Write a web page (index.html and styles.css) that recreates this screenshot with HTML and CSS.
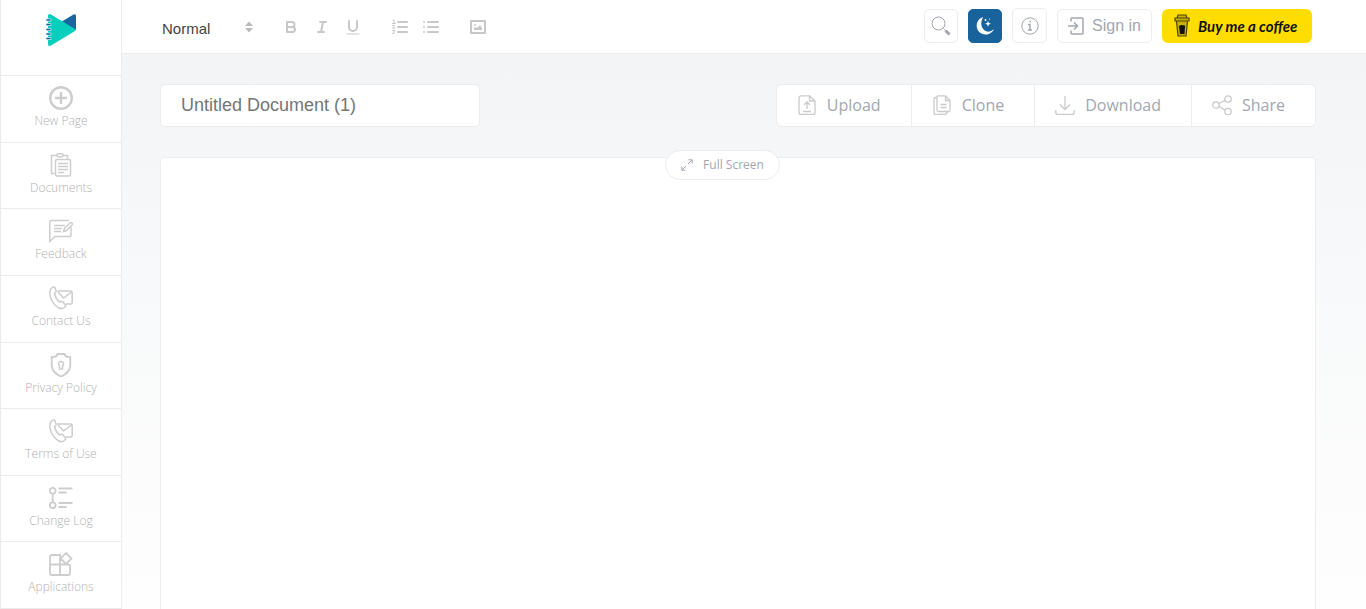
FILE: index.html
```html
<!DOCTYPE html>
<html lang="en">
<head>
    <meta charset="UTF-8">
    <meta name="viewport" content="width=device-width, initial-scale=1.0">
    <title>Untitled Document (1)</title>
    <link rel="stylesheet" href="styles.css">
</head>
<body>

<div class="app">
    <nav class="sidebar">
        <a href="#" class="logo" aria-label="Home">
            <svg width="32" height="34" viewBox="0 0 32 34">
                <path d="M16 9 L28.5 1.5 Q31 .5 31 3 V17 Z" fill="#1a649f"/>
                <path d="M3 3 Q3 0 6 1.5 L30 16 Q31 17 30 18 L6 32.5 Q3 34 3 31 Z" fill="#06d0bd"/>
                <path d="M2 7h3M2 11.500h3M2 16.500h3M2 21h3M2 25.500h3" stroke="#d5f3f3" stroke-width="3" stroke-linecap="round"/>
                <path d="M2 7h3M2 11.500h3M2 16.500h3M2 21h3M2 25.500h3" stroke="#1a649f" stroke-width="1.6" stroke-linecap="round"/>
            </svg>
        </a>
        <a href="#" class="nav-item">
            <svg class="icon bold" viewBox="0 0 24 24"><circle cx="12" cy="12" r="10.8"/><path d="M12 6v12M6 12h12"/></svg>
            <span>New Page</span>
        </a>
        <a href="#" class="nav-item">
            <svg class="icon" viewBox="0 0 24 24"><path d="M5.500 20.500H2.500V2.500h6M14 2.500h4.500v4"/><rect x="8" y=".8" width="6" height="3" rx="1"/><rect x="6.500" y="6.500" width="15" height="16.500" rx="1.5"/><path d="M9 10.500h10M9 13.500h10M9 16.500h10M9 19.500h6"/></svg>
            <span>Documents</span>
        </a>
        <a href="#" class="nav-item">
            <svg class="icon" viewBox="0 0 24 24"><path d="M20 1.500H2Q.8 1.500.8 3v19.500L6 17.500h14.500q1.500 0 1.500-1.500V8"/><path d="M5 6.500h11M5 9.500h8M5 12.500h7M14.500 12.500l1-3L21 4q1-1 2 0t0 2l-5.500 5.500z"/></svg>
            <span>Feedback</span>
        </a>
        <a href="#" class="nav-item">
            <svg class="icon" viewBox="0 0 24 24"><path d="M2 2.500q2-2 3.500-1.500l1.700 4q.2 1.300-1.700 2.500 1 5 5 8.500 2-1 3-.5l3 3.500q.5 1-1 2.500-4 3-9-2T.8 8Q.6 4.500 2 2.500z"/><path d="M8.500 5h13q1.700 0 1.700 1.500v10q0 1.500-1.700 1.500H17M9 6l5.500 6L22.500 6"/></svg>
            <span>Contact Us</span>
        </a>
        <a href="#" class="nav-item">
            <svg class="icon" viewBox="0 0 24 24"><path class="thick" d="M8.500 1h7q.5 2.800 3.500 2.800h2.300V13q-1 7-9.300 10.500Q3.700 20 2.700 13V3.800H5Q8 3.800 8.500 1z"/><path d="M10.500 16v-3a2.500 2.500 0 1 1 3 0V16z"/></svg>
            <span>Privacy Policy</span>
        </a>
        <a href="#" class="nav-item">
            <svg class="icon" viewBox="0 0 24 24"><path d="M2 2.500q2-2 3.500-1.500l1.700 4q.2 1.300-1.700 2.500 1 5 5 8.500 2-1 3-.5l3 3.500q.5 1-1 2.500-4 3-9-2T.8 8Q.6 4.500 2 2.500z"/><path d="M8.500 5h13q1.700 0 1.700 1.500v10q0 1.500-1.700 1.500H17M9 6l5.500 6L22.500 6"/></svg>
            <span>Terms of Use</span>
        </a>
        <a href="#" class="nav-item">
            <svg class="icon thick" viewBox="0 0 24 24"><circle cx="3.700" cy="4.700" r="2.900"/><circle cx="3.700" cy="19.300" r="2.900"/><path d="M3.700 8v8M9.500 2.500h14M9.500 6.500h8M9.500 17h14M9.500 21h8"/></svg>
            <span>Change Log</span>
        </a>
        <a href="#" class="nav-item">
            <svg class="icon" viewBox="0 0 24 24"><path class="thick" d="M11 12.500H1V5q0-2 2-2H11v20H3q-2 0-2-2v-8.500M11 12.500h8q2 0 2 2V21q0 2-2 2h-8M17 1l5.500 5.500-5.500 5.500-5.500-5.500z"/></svg>
            <span>Applications</span>
        </a>
    </nav>

    <div class="content">
        <header class="topbar">
            <div class="format">
                <label class="picker">
                    <select aria-label="Text style">
                        <option>Normal</option>
                        <option>Heading 1</option>
                        <option>Heading 2</option>
                    </select>
                    <svg width="18" height="18" viewBox="0 0 18 18"><path d="M9 3.500L13 8H5zM9 14.500L13 10H5z"/></svg>
                </label>
                <div class="tools">
                    <button type="button" aria-label="Bold"><svg viewBox="0 0 18 18"><path d="M5 4h5a2.500 2.500 0 0 1 0 5H5zM5 9h5.500a2.500 2.500 0 0 1 0 5H5z"/></svg></button>
                    <button type="button" aria-label="Italic"><svg viewBox="0 0 18 18"><path d="M7 4h6M5 14h6M8 14l2-10"/></svg></button>
                    <button type="button" aria-label="Underline"><svg viewBox="0 0 18 18"><path d="M5 3v6a4 4 0 0 0 8 0V3"/><path class="thin" d="M3 16h12"/></svg></button>
                </div>
                <div class="tools">
                    <button type="button" aria-label="Numbered list"><svg viewBox="0 0 18 18"><path d="M7 4h9M7 9h9M7 14h9"/><path class="thin" d="M2 2h1v3M1.500 5.500h3M1.500 7.500q2.500-.5 2 .7l-2 2h2.500M1.500 12.500h2.500l-1 1.500q1.500 1.500-1.500 1.500"/></svg></button>
                    <button type="button" aria-label="Bullet list"><svg viewBox="0 0 18 18"><path d="M6 4h10M6 9h10M6 14h10M2 4h.01M2 9h.01M2 14h.01"/></svg></button>
                </div>
                <div class="tools">
                    <button type="button" aria-label="Insert image"><svg viewBox="0 0 18 18"><rect x="2" y="3" width="14" height="12"/><path class="solid" d="M5 12v-2l2-1 1 1 3-3 2 3v2z"/><circle class="solid" cx="6" cy="7" r="1"/></svg></button>
                </div>
            </div>

            <div class="actions">
                <button type="button" class="square" aria-label="Search"><svg width="20" height="20" viewBox="0 0 20 20"><circle cx="7.500" cy="7.500" r="6.500"/><path d="M12.500 12.500l2 2"/><path d="M14.500 14.500l4 4" stroke-width="3"/></svg></button>
                <button type="button" class="square dark" aria-label="Dark mode"><svg width="20" height="20" viewBox="0 0 20 20"><path d="M8 1A9 9 0 1 0 19 13Q14 18 9 14T8 1z"/><path d="M13 4.800l.8 2.200 2.200.8-2.200.8-.8 2.200-.8-2.200-2.200-.8 2.200-.8z"/><circle cx="10.500" cy="4" r=".9"/><circle cx="14.500" cy="3" r=".6"/></svg></button>
                <button type="button" class="square info" aria-label="Information"><svg width="18" height="18" viewBox="0 0 18 18"><circle cx="9" cy="9" r="8.200"/><path d="M7 7.500h2v5.500M7 13h4M8.500 4.500h1.500" stroke-width="1.5"/></svg></button>
                <button type="button" class="signin"><svg width="16" height="18" viewBox="0 0 16 18"><path d="M3 4.500V2Q3 1 4 1h10q1 0 1 1v14q0 1-1 1H4q-1 0-1-1v-2.500M0 9h9M6 5.500L9.500 9 6 12.500"/></svg>Sign in</button>
                <a href="#" class="coffee">
                    <svg width="16" height="23" viewBox="0 0 16 23"><path d="M2.500 7l1.500 15h8l1.500-15M1 4h14v3H1zM3 4l1-3h8l1 3" fill="#c9ae00" stroke="#4d4600" stroke-width="1.2"/><path d="M5 12l2-1 4 .5-.5 8.500H6z" fill="#111" stroke="none"/></svg>
                    <span>Buy me a coffee</span>
                </a>
            </div>
        </header>

        <main class="workspace">
            <div class="doc-bar">
                <input type="text" class="doc-title" aria-label="Document title" placeholder="Untitled Document (1)">
                <div class="doc-actions">
                    <button type="button"><svg viewBox="0 0 20 20"><path d="M12.500 .8H4Q2 .8 2 3v14.500Q2 19.500 4 19.500h12q2 0 2-2V6zM12.500 .8V6H18M10 14V7.500M7 10l3-3 3 3M6 16.500h8"/></svg>Upload</button>
                    <button type="button"><svg viewBox="0 0 20 20"><path d="M13.500 .8H6.500Q5 .8 5 2.500v12.500q0 1.500 1.500 1.500h10q1.500 0 1.500-1.500V5.500zM13.500 .8v4.700H18M5 2.500H3.500Q2 2.500 2 4v13.500q0 2 2 2h9.500l2-2.500M8.500 9.500h6M8.500 12.500h6"/></svg>Clone</button>
                    <button type="button"><svg viewBox="0 0 20 20"><path d="M10 1v13M5 9.500l5 5 5-5M.8 15v2.500q0 2 2 2h14.400q2 0 2-2V15"/></svg>Download</button>
                    <button type="button"><svg viewBox="0 0 20 20"><circle cx="4" cy="10" r="3.200"/><circle cx="16" cy="4" r="3.200"/><circle cx="16" cy="16.500" r="3.200"/><path d="M7 8.500l6-3M7 11.500l6 3.500"/></svg>Share</button>
                </div>
            </div>
            <div class="paper">
                <button type="button" class="fullscreen"><svg width="12" height="12" viewBox="0 0 12 12"><path d="M7.500 .8h3.700v3.700M11 1L7 5M4.500 11.200H.8V7.500M1 11l4-4"/></svg>Full Screen</button>
                <div class="editor" contenteditable="true" role="textbox" aria-label="Document text"></div>
            </div>
        </main>
    </div>
</div>

</body>
</html>
```
FILE: styles.css
```css
* {
    box-sizing: border-box;
}
body {
    margin: 0;
    font-family: "Open Sans", sans-serif;
    color: #a2a7af;
    background-color: #fff;
}
button {
    font: inherit;
    color: inherit;
    background: #fff;
    border: 1px solid #ebecee;
    cursor: pointer;
    padding: 0;
}
svg {
    display: block;
    flex: none;
    fill: none;
    stroke: currentColor;
}
.app {
    display: flex;
    height: 100vh;
    overflow: hidden;
}

/* Sidebar */
.sidebar {
    display: flex;
    flex-direction: column;
    flex: none;
    width: 122px;
    border: 1px solid #ebebeb;
    border-width: 0 1px;
}
.sidebar a {
    text-decoration: none;
    border-bottom: 1px solid #ebebeb;
}
.logo {
    height: 76px;
    padding: 13px 0 0 44px;
}
.logo svg {
    stroke: none;
}
.nav-item {
    display: flex;
    flex: 1;
    flex-direction: column;
    align-items: center;
    padding-top: 10px;
    font-size: 12px;
    font-weight: 300;
    line-height: 22px;
    color: #b2b2b2;
}
.icon {
    width: 24px;
    height: 24px;
    color: #cdcdcd;
    stroke-width: 1.5;
}
.icon.bold {
    stroke-width: 2.4;
}
.thick,
.icon.thick {
    stroke-width: 1.8;
}

/* Top bar */
.content {
    display: flex;
    flex: 1;
    flex-direction: column;
    min-width: 0;
}
.topbar {
    display: flex;
    justify-content: space-between;
    height: 54px;
    padding: 0 54px 0 40px;
    border-bottom: 1px solid #ebecee;
}
.format,
.actions,
.tools {
    display: flex;
    align-items: center;
}
.format {
    gap: 19px;
}
.tools {
    gap: 3px;
}
.picker {
    display: flex;
    align-items: center;
    width: 96px;
    color: #444;
}
.picker select {
    flex: 1;
    width: 100%;
    padding: 3px 0 0;
    border: 0;
    appearance: none;
    background: none;
    color: inherit;
    font: 15px "Liberation Sans", Arial, sans-serif;
}
.picker svg {
    fill: #bbb;
    stroke: none;
}
.tools button {
    display: flex;
    justify-content: center;
    width: 28px;
    border: 0;
    color: #c8c8c8;
}
.tools svg {
    width: 18px;
    height: 18px;
    stroke-width: 2;
    stroke-linecap: round;
    stroke-linejoin: round;
}
.tools .thin {
    stroke-width: 1;
}
.tools .solid {
    fill: currentColor;
    stroke: none;
}
.actions {
    gap: 10px;
    padding-bottom: 2px;
}
.square,
.signin {
    display: flex;
    align-items: center;
    justify-content: center;
    height: 34px;
    border-radius: 5px;
}
.square {
    width: 34px;
}
.square.info {
    width: 35px;
    height: 35px;
}
.square.dark {
    background-color: #19639d;
    border-color: #19639d;
    color: #fff;
}
.dark svg {
    fill: #fff;
    stroke: none;
}
.signin {
    gap: 8px;
    width: 95px;
    font: 16px "Liberation Sans", Arial, sans-serif;
}
.signin svg {
    stroke-width: 1.5;
}
.coffee {
    display: flex;
    align-items: center;
    gap: 8px;
    width: 150px;
    height: 34px;
    padding-left: 12px;
    border-radius: 6px;
    background-color: #fd0;
    color: #111;
    font: italic bold 15px Lato, cursive;
    text-decoration: none;
    white-space: nowrap;
}

/* Document area */
.workspace {
    display: flex;
    flex: 1;
    flex-direction: column;
    gap: 30px;
    padding: 30px 50px 0 38px;
    background: linear-gradient(#f3f4f6, #f8f9fa 40%, #fefefe);
}
.doc-bar {
    display: flex;
    justify-content: space-between;
}
.doc-title {
    width: 320px;
    height: 43px;
    padding: 0 20px;
    border: 1px solid #ebecee;
    border-radius: 5px;
    font: 18px "Liberation Sans", Arial, sans-serif;
}
.doc-title::placeholder {
    color: #757575;
}
.doc-actions {
    display: flex;
    border: 1px solid #ebecee;
    border-radius: 6px;
    overflow: hidden;
}
.doc-actions button {
    display: flex;
    align-items: center;
    gap: 10px;
    padding: 0 30px 2px 20px;
    border-width: 0 1px 0 0;
    font-size: 16px;
}
.doc-actions button:last-child {
    border-right: 0;
}
.doc-actions svg {
    width: 20px;
    height: 20px;
    color: #cacaca;
    stroke-width: 1.3;
}
.paper {
    position: relative;
    display: flex;
    flex: 1;
    border: 1px solid #ebecee;
    border-bottom: 0;
    border-radius: 5px 5px 0 0;
    background-color: #fff;
}
.editor {
    flex: 1;
    padding: 40px 20px;
    outline: 0;
}
.fullscreen {
    position: absolute;
    top: -8px;
    left: calc(50% - 73px);
    display: flex;
    align-items: center;
    justify-content: center;
    gap: 10px;
    width: 115px;
    height: 30px;
    padding-bottom: 1px;
    border-radius: 15px;
    font-size: 12px;
}
```
